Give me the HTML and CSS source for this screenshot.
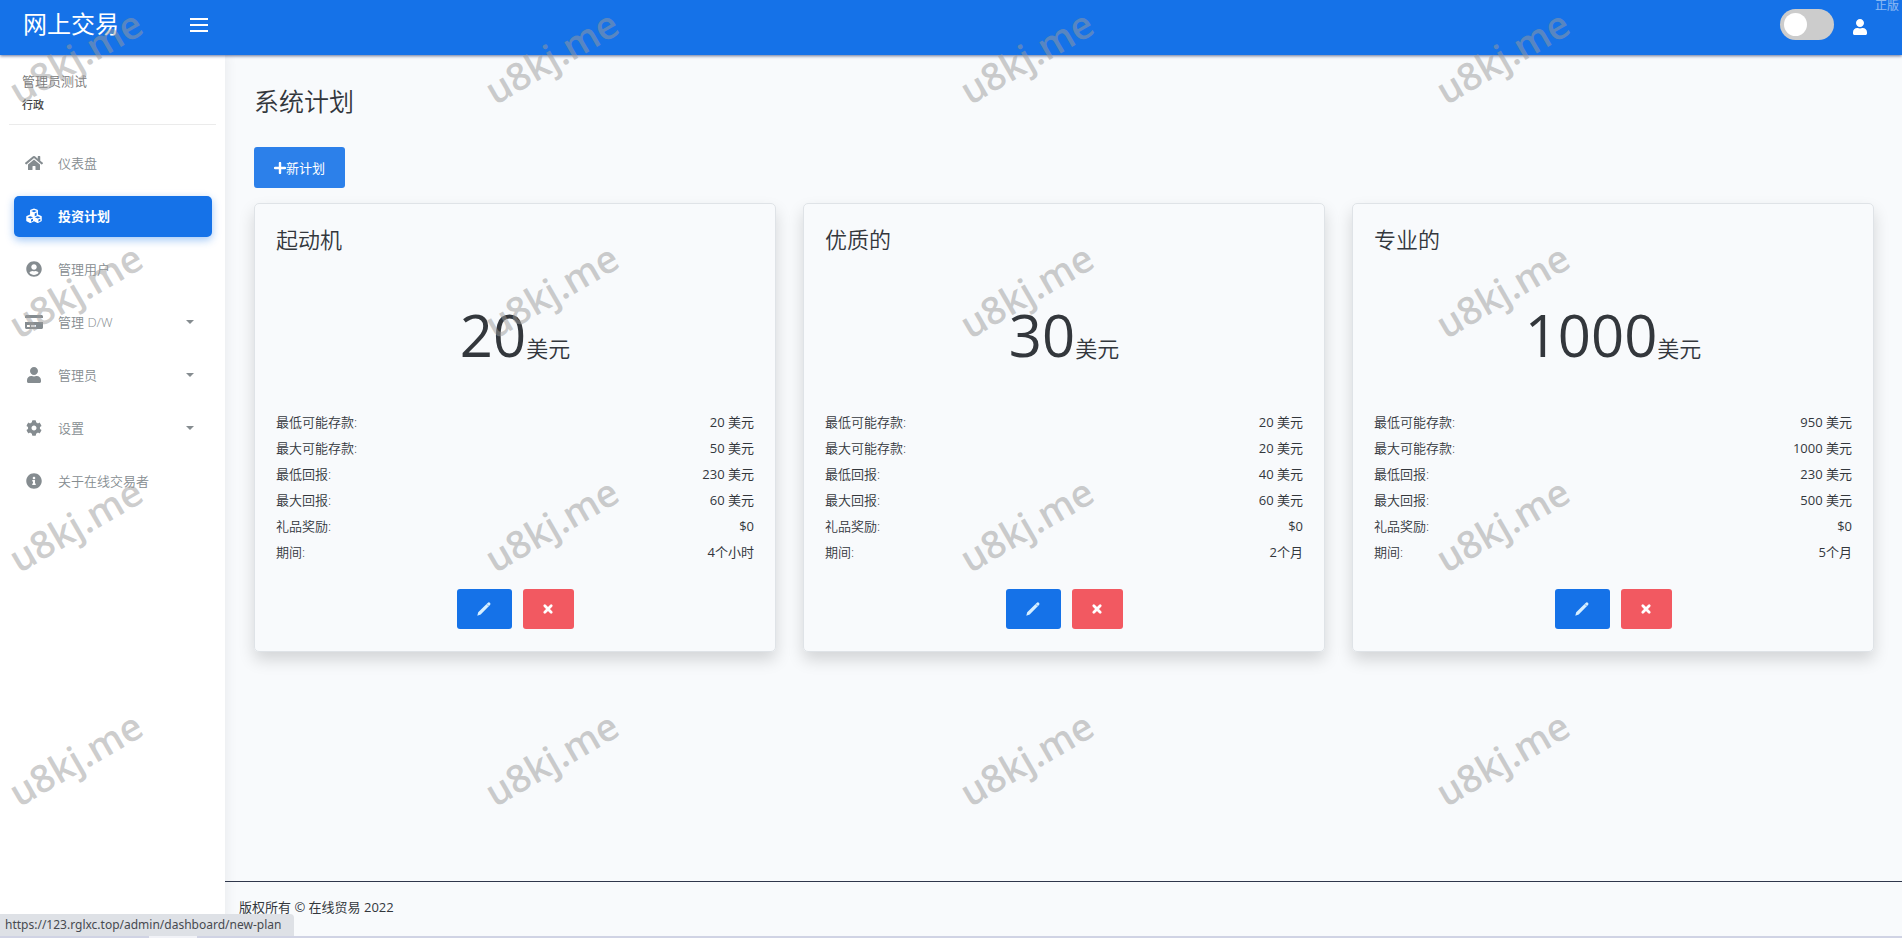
FILE: index.html
```html
<!DOCTYPE html>
<html lang="zh-CN">
<head>
<meta charset="utf-8">
<title>系统计划</title>
<meta name="viewport" content="width=device-width, initial-scale=1">
<link rel="stylesheet" href="styles.css">
</head>
<body>
<svg class="sprite" aria-hidden="true">
  <symbol id="home" viewBox="0 0 576 512"><path d="M280.37 148.26L96 300.11V464a16 16 0 0 0 16 16l112.06-.29a16 16 0 0 0 15.92-16V368a16 16 0 0 1 16-16h64a16 16 0 0 1 16 16v95.64a16 16 0 0 0 16 16.05L464 480a16 16 0 0 0 16-16V300L295.67 148.26a12.19 12.19 0 0 0-15.3 0zM571.6 251.47L488 182.56V44.05a12 12 0 0 0-12-12h-56a12 12 0 0 0-12 12v72.61L318.47 43a48 48 0 0 0-61 0L4.34 251.47a12 12 0 0 0-1.6 16.9l25.5 31A12 12 0 0 0 45.15 301l235.22-193.74a12.19 12.19 0 0 1 15.3 0L530.9 301a12 12 0 0 0 16.9-1.6l25.5-31a12 12 0 0 0-1.7-16.93z"/></symbol>
  <symbol id="cubes" viewBox="0 0 512 512"><path fill-rule="evenodd" d="M256 14l112 42q14 6 14 22v132l108 42q14 6 14 22v128q0 14-12 20l-108 54q-10 5-20 0L256 422l-108 54q-10 5-20 0L20 422q-12-6-12-20V274q0-16 14-22l108-42V78q0-16 14-22zM256 62l-90 34 90 37 90-37zM278 172v94l64-28v-94zM138 260l-90 34 90 38 90-38zM160 370v66l64-32v-62zM374 260l-90 34 90 38 90-38zM396 370v66l64-32v-62z"/></symbol>
  <symbol id="user-circle" viewBox="0 0 496 512"><path d="M248 8C111 8 0 119 0 256s111 248 248 248 248-111 248-248S385 8 248 8zm0 96c48.600 0 88 39.400 88 88s-39.400 88-88 88-88-39.400-88-88 39.400-88 88-88zm0 344c-58.700 0-111.300-26.600-146.500-68.200 18.800-35.400 55.600-59.800 98.500-59.800 2.400 0 4.800.4 7.100 1.100 13 4.200 26.600 6.900 40.900 6.900 14.300 0 28-2.700 40.900-6.900 2.300-.7 4.700-1.100 7.100-1.100 42.900 0 79.700 24.400 98.500 59.800C359.300 421.400 306.700 448 248 448z"/></symbol>
  <symbol id="card" viewBox="0 0 576 512"><path d="M0 432c0 26.500 21.500 48 48 48h480c26.500 0 48-21.500 48-48V256H0v176zm192-68c0-6.600 5.400-12 12-12h136c6.600 0 12 5.400 12 12v40c0 6.600-5.400 12-12 12H204c-6.600 0-12-5.400-12-12v-40zm-128 0c0-6.600 5.400-12 12-12h72c6.600 0 12 5.400 12 12v40c0 6.600-5.400 12-12 12H76c-6.600 0-12-5.400-12-12v-40zM576 80v48H0V80c0-26.500 21.500-48 48-48h480c26.500 0 48 21.500 48 48z"/></symbol>
  <symbol id="user" viewBox="0 0 448 512"><path d="M224 256c70.700 0 128-57.300 128-128S294.700 0 224 0 96 57.300 96 128s57.300 128 128 128zm89.600 32h-16.700c-22.200 10.200-46.900 16-72.900 16s-50.600-5.800-72.900-16h-16.700C60.200 288 0 348.200 0 422.400V464c0 26.500 21.500 48 48 48h352c26.500 0 48-21.500 48-48v-41.600c0-74.200-60.200-134.400-134.400-134.400z"/></symbol>
  <symbol id="cog" viewBox="0 0 512 512"><path d="M487.400 315.700l-42.600-24.600c4.300-23.200 4.300-47 0-70.200l42.600-24.600c4.900-2.800 7.100-8.600 5.500-14-11.100-35.600-30-67.800-54.700-94.600-3.800-4.100-10-5.100-14.800-2.300L380.800 110c-17.900-15.400-38.500-27.300-60.800-35.100V25.800c0-5.600-3.900-10.500-9.400-11.700-36.700-8.200-74.300-7.800-109.200 0-5.500 1.200-9.400 6.100-9.400 11.700V75c-22.200 7.900-42.800 19.800-60.800 35.100L88.700 85.500c-4.900-2.800-11-1.900-14.800 2.300-24.700 26.700-43.600 58.900-54.700 94.600-1.700 5.400.6 11.200 5.500 14L67.300 221c-4.300 23.200-4.300 47 0 70.200l-42.600 24.600c-4.900 2.800-7.100 8.600-5.500 14 11.100 35.600 30 67.800 54.700 94.600 3.800 4.100 10 5.100 14.800 2.300l42.600-24.600c17.900 15.400 38.500 27.300 60.800 35.100v49.200c0 5.600 3.900 10.500 9.400 11.700 36.700 8.200 74.300 7.800 109.200 0 5.500-1.200 9.400-6.100 9.400-11.700v-49.200c22.200-7.900 42.800-19.800 60.800-35.100l42.600 24.600c4.900 2.800 11 1.900 14.800-2.300 24.700-26.700 43.600-58.900 54.700-94.600 1.500-5.500-.7-11.300-5.600-14.100zM256 336c-44.100 0-80-35.900-80-80s35.900-80 80-80 80 35.900 80 80-35.900 80-80 80z"/></symbol>
  <symbol id="info" viewBox="0 0 512 512"><path d="M256 8C119 8 8 119 8 256s111 248 248 248 248-111 248-248S393 8 256 8zm0 110c23.200 0 42 18.800 42 42s-18.800 42-42 42-42-18.800-42-42 18.800-42 42-42zm56 254c0 6.600-5.400 12-12 12h-88c-6.600 0-12-5.400-12-12v-24c0-6.600 5.400-12 12-12h12v-64h-12c-6.600 0-12-5.400-12-12v-24c0-6.600 5.400-12 12-12h64c6.600 0 12 5.400 12 12v100h12c6.600 0 12 5.400 12 12v24z"/></symbol>
  <symbol id="plus" viewBox="0 0 12 12"><path d="M6 1v10M1 6h10" fill="none" stroke="currentColor" stroke-width="2.400" stroke-linecap="round"/></symbol>
  <symbol id="times" viewBox="0 0 12 12"><path d="M2.800 2.800l6.400 6.400M9.200 2.800L2.800 9.200" fill="none" stroke="currentColor" stroke-width="2.800" stroke-linecap="round"/></symbol>
  <symbol id="pencil" viewBox="0 0 14 14"><path d="M.3 13.700l.9-3.500L10.600.9q1.300-1 2.300-.1t.1 2.300L3.700 12.600z"/><path d="M10 2.400l1.500 1.500" stroke="#1572e8" stroke-width=".6"/></symbol>
</svg>

<header class="topbar">
  <a class="brand" href="#">网上交易</a>
  <button class="menu-button" type="button" aria-label="菜单"><span></span><span></span><span></span></button>
  <div class="topbar-tools">
    <input class="switch" type="checkbox" aria-label="切换主题">
    <button class="account" type="button" aria-label="账户"><svg><use href="#user"/></svg></button>
  </div>
  <span class="edition">正版</span>
</header>

<div class="shell">
  <aside class="sidebar">
    <div class="profile">
      <div class="profile-name">管理员测试</div>
      <div class="profile-role">行政</div>
    </div>
    <nav class="nav">
      <a href="#"><svg><use href="#home"/></svg><span>仪表盘</span></a>
      <a class="active" href="#"><svg><use href="#cubes"/></svg><span>投资计划</span></a>
      <a href="#"><svg><use href="#user-circle"/></svg><span>管理用户</span></a>
      <a class="has-menu" href="#"><svg><use href="#card"/></svg><span>管理 D/W</span></a>
      <a class="has-menu" href="#"><svg><use href="#user"/></svg><span>管理员</span></a>
      <a class="has-menu" href="#"><svg><use href="#cog"/></svg><span>设置</span></a>
      <a href="#"><svg><use href="#info"/></svg><span>关于在线交易者</span></a>
    </nav>
  </aside>

  <div class="page">
    <main class="content">
      <h1>系统计划</h1>
      <a class="btn btn-new" href="#"><svg><use href="#plus"/></svg>新计划</a>
      <div class="plans">
        <section class="plan">
          <h2>起动机</h2>
          <p class="price"><span class="amount">20</span><span class="currency">美元</span></p>
          <dl>
            <div><dt>最低可能存款:</dt><dd>20 美元</dd></div>
            <div><dt>最大可能存款:</dt><dd>50 美元</dd></div>
            <div><dt>最低回报:</dt><dd>230 美元</dd></div>
            <div><dt>最大回报:</dt><dd>60 美元</dd></div>
            <div><dt>礼品奖励:</dt><dd>$0</dd></div>
            <div><dt>期间:</dt><dd>4个小时</dd></div>
          </dl>
          <div class="actions">
            <button class="btn btn-edit" type="button" aria-label="编辑"><svg><use href="#pencil"/></svg></button>
            <button class="btn btn-delete" type="button" aria-label="删除"><svg><use href="#times"/></svg></button>
          </div>
        </section>
        <section class="plan">
          <h2>优质的</h2>
          <p class="price"><span class="amount">30</span><span class="currency">美元</span></p>
          <dl>
            <div><dt>最低可能存款:</dt><dd>20 美元</dd></div>
            <div><dt>最大可能存款:</dt><dd>20 美元</dd></div>
            <div><dt>最低回报:</dt><dd>40 美元</dd></div>
            <div><dt>最大回报:</dt><dd>60 美元</dd></div>
            <div><dt>礼品奖励:</dt><dd>$0</dd></div>
            <div><dt>期间:</dt><dd>2个月</dd></div>
          </dl>
          <div class="actions">
            <button class="btn btn-edit" type="button" aria-label="编辑"><svg><use href="#pencil"/></svg></button>
            <button class="btn btn-delete" type="button" aria-label="删除"><svg><use href="#times"/></svg></button>
          </div>
        </section>
        <section class="plan">
          <h2>专业的</h2>
          <p class="price"><span class="amount">1000</span><span class="currency">美元</span></p>
          <dl>
            <div><dt>最低可能存款:</dt><dd>950 美元</dd></div>
            <div><dt>最大可能存款:</dt><dd>1000 美元</dd></div>
            <div><dt>最低回报:</dt><dd>230 美元</dd></div>
            <div><dt>最大回报:</dt><dd>500 美元</dd></div>
            <div><dt>礼品奖励:</dt><dd>$0</dd></div>
            <div><dt>期间:</dt><dd>5个月</dd></div>
          </dl>
          <div class="actions">
            <button class="btn btn-edit" type="button" aria-label="编辑"><svg><use href="#pencil"/></svg></button>
            <button class="btn btn-delete" type="button" aria-label="删除"><svg><use href="#times"/></svg></button>
          </div>
        </section>
      </div>
    </main>
    <footer class="footer">版权所有 © 在线贸易 2022</footer>
  </div>
</div>

<div class="status">https://123.rglxc.top/admin/dashboard/new-plan</div>
<div class="edge"></div>

<div class="watermarks" aria-hidden="true">
  <span>u8kj.me</span><span>u8kj.me</span><span>u8kj.me</span><span>u8kj.me</span>
  <span>u8kj.me</span><span>u8kj.me</span><span>u8kj.me</span><span>u8kj.me</span>
  <span>u8kj.me</span><span>u8kj.me</span><span>u8kj.me</span><span>u8kj.me</span>
  <span>u8kj.me</span><span>u8kj.me</span><span>u8kj.me</span><span>u8kj.me</span>
</div>
</body>
</html>
```
FILE: styles.css
```css
* { box-sizing: border-box; }

body {
  margin: 0;
  min-height: 100vh;
  display: flex;
  flex-direction: column;
  position: relative;
  overflow-x: hidden;
  background: #f8fafc;
  color: #33373c;
  font: 400 13px/26px "Open Sans", "Noto Sans CJK SC", sans-serif;
}

h1, h2, p, dl, dd { margin: 0; font-weight: 350; }
a { color: inherit; text-decoration: none; }
button { border: 0; padding: 0; font: inherit; color: inherit; cursor: pointer; }
svg { fill: currentColor; flex: none; }
.sprite { display: none; }

.topbar {
  position: relative;
  z-index: 2;
  display: flex;
  align-items: center;
  height: 55px;
  padding: 0 33px 7px 23px;
  background: #1572e8;
  color: #fff;
  box-shadow: 0 1px 3px rgba(0, 20, 80, .6);
}

.brand { width: 167px; font-size: 24px; line-height: 36px; }

.menu-button {
  display: grid;
  gap: 4px;
  width: 18px;
  padding-top: 2px;
  background: none;
}
.menu-button span { height: 2px; background: #fff; }

.topbar-tools { margin-left: auto; display: flex; align-items: center; gap: 17px; }

.switch {
  appearance: none;
  width: 54px;
  height: 31px;
  margin: 0;
  padding: 4px;
  border-radius: 16px;
  background: #ccc;
}
.switch::before {
  content: "";
  display: block;
  width: 23px;
  height: 23px;
  border-radius: 50%;
  background: #fff;
}

.account { padding-top: 6px; width: 18px; background: none; display: flex; justify-content: center; }
.account svg { width: 16px; height: 16px; }

.edition {
  position: absolute;
  top: 0;
  right: 3px;
  font-size: 12px;
  line-height: 12px;
  opacity: .5;
}

.shell { flex: 1; display: flex; }

.sidebar {
  width: 225px;
  flex: none;
  background: #fff;
  box-shadow: 2px 0 10px rgba(69, 65, 78, .08);
}

.profile { margin: 0 9px; padding: 13px 13px 9px; border-bottom: 1px solid #ebebeb; }
.profile-name { color: #777; font-weight: 350; }
.profile-role { font-size: 11px; line-height: 21px; font-weight: 500; color: #444; }

.nav { display: grid; gap: 12px; padding: 18px 13px 0 14px; }
.nav a {
  display: flex;
  align-items: center;
  gap: 15px;
  height: 41px;
  padding: 0 18px 1px 11px;
  border-radius: 5px;
  color: #858c90;
  font-weight: 350;
}
.nav svg { width: 18px; height: 16px; }
.nav .active {
  background: #1572e8;
  color: #fff;
  font-weight: 700;
  box-shadow: 0 3px 8px rgba(21, 114, 232, .4);
}
.has-menu::after {
  content: "";
  margin-left: auto;
  border: 4px solid transparent;
  border-top-color: currentColor;
  border-bottom: 0;
}

.page { flex: 1; min-width: 0; display: flex; flex-direction: column; }
.content { flex: 1; padding: 28px 28px 0 29px; }

h1 { font-size: 25px; line-height: 36px; }

.btn {
  display: inline-flex;
  align-items: center;
  justify-content: center;
  height: 40px;
  border-radius: 3px;
  color: #fff;
}
.btn-new { height: 41px; margin-top: 28px; padding: 0 20px; background: #2c80ea; }
.btn-new svg { width: 12px; height: 12px; }

.plans { display: grid; grid-template-columns: repeat(3, 1fr); gap: 27px; margin-top: 15px; }

.plan {
  padding: 17px 21px 22px;
  border: 1px solid #dfe3e7;
  border-radius: 5px;
  box-shadow: 0 8px 16px rgba(0, 0, 0, .15);
}

h2 { font-size: 22px; line-height: 36px; }

.price { margin: 45px 0 24px; text-align: center; line-height: 66px; }
.amount { font-size: 58px; font-weight: 400; }
.currency { font-size: 22px; }

dl > div { display: flex; justify-content: space-between; }
dd { font-weight: 400; }

.actions { display: flex; justify-content: center; gap: 11px; margin-top: 24px; }
.btn-edit { width: 55px; background: #1572e8; color: #d6efff; }
.btn-edit svg { width: 14px; height: 14px; }
.btn-delete { width: 51px; background: #f25961; }
.btn-delete svg { width: 12px; height: 12px; }

.footer { padding: 12px 14px 18px; border-top: 1px solid #2f374b; }

.status {
  position: absolute;
  z-index: 3;
  left: 0;
  bottom: 2px;
  padding: 0 13px 0 5px;
  border-radius: 0 4px 0 0;
  background: #dee1e6;
  color: #474a50;
  font: 400 12px/22px "Noto Sans", sans-serif;
}

.edge {
  position: absolute;
  z-index: 3;
  left: 0;
  right: 0;
  bottom: 0;
  height: 2px;
  background: linear-gradient(90deg, #d0d3e4 149px, #f1f2f7 149px, #f1f2f7 197px, #d0d3e4 197px);
}

.watermarks {
  position: absolute;
  z-index: 4;
  top: 31px;
  left: 0;
  display: grid;
  grid-template-columns: repeat(4, 25vw);
  grid-auto-rows: 234px;
  pointer-events: none;
}
.watermarks span {
  justify-self: start;
  align-self: start;
  width: 150px;
  text-align: center;
  font: 600 38px/50px "Open Sans", sans-serif;
  color: rgba(155, 155, 155, .5);
  transform: rotate(-30deg);
}
```
